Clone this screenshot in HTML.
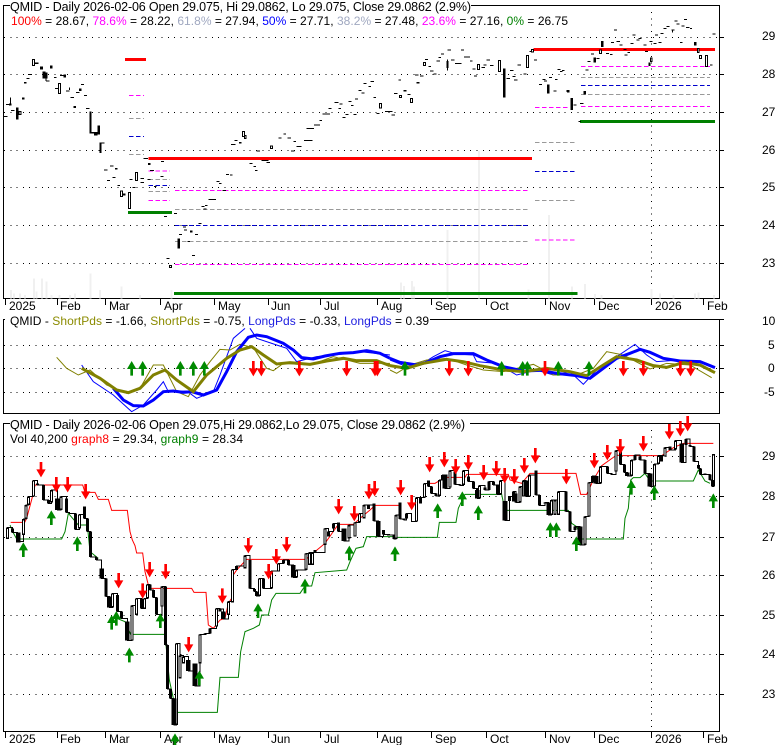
<!DOCTYPE html>
<html><head><meta charset="utf-8"><style>
html,body{margin:0;padding:0;background:#fff}
svg{display:block}
text{font-family:"Liberation Sans",Arial,sans-serif;font-size:12px;fill:#000}
.g{stroke:#000;stroke-width:1;stroke-dasharray:1 5.3;fill:none;shape-rendering:crispEdges}
.f{stroke:#000;stroke-width:1;fill:none;shape-rendering:crispEdges}
.t{fill:none;stroke:#000;stroke-width:3;shape-rendering:crispEdges}
.k rect{fill:#000;shape-rendering:crispEdges}
.h rect{fill:#fff;stroke:#000;stroke-width:3;shape-rendering:crispEdges}
.v{fill:none;stroke:#f0f0f0;stroke-width:6;shape-rendering:crispEdges}
.c{shape-rendering:crispEdges}
</style></head><body>
<svg width="780" height="745" viewBox="0 0 780 745" xmlns="http://www.w3.org/2000/svg">
<defs>
<polygon id="u" fill="#008a00" points="0,0 14,24 4,24 4,44 -4,44 -4,24 -14,24"/>
<polygon id="d" fill="#f00" points="-4,0 4,0 4,22 14,22 0,46 -14,22 -4,22"/>
</defs>
<rect width="780" height="745" fill="#fff"/>

<!-- PANEL 1 -->
<path class="g" d="M4 37.5H719M4 74.5H719M4 112.5H719M4 150.5H719M4 187.5H719M4 225.5H719M4 263.5H719"/>
<path class="g" d="M651.5 12V298"/>
<path class="f" d="M10 5.5H3.5V298.5H719.5V5.5H471M719 37.5h5M719 74.5h5M719 112.5h5M719 150.5h5M719 187.5h5M719 225.5h5M719 263.5h5M5.5 298v7M57.5 298v7M105.5 298v7M160.5 298v7M214.5 298v7M268.5 298v7M320.5 298v7M377.5 298v7M431.5 298v7M486.5 298v7M545.5 298v7M594.5 298v7M651.5 298v7M703.5 298v7"/>

<g transform="scale(.33333)">
<path class="v" d="M33 895V870M42 895V880M60 895V880M75 895V885M102 895V835M110 895V875M126 895V835M140 895V845M155 895V885M178 895V885M210 895V885M225 895V880M272 895V820M300 895V870M365 895V860M420 895V885M515 895V870"/>
<path class="c" d="M375 178H438" stroke="#f00" stroke-width="9" fill="none"/>
<path class="c" d="M445 475H1170" stroke="#f00" stroke-width="9" fill="none"/>
<path class="c" d="M384 637H516M522 880H1170" stroke="#008000" stroke-width="9" fill="none"/>
<g class="c" fill="none" stroke-width="3" stroke-dasharray="14 7">
<path stroke="#f0f" d="M387 286H432M445 513H510M445 601H510M525 571H1170M525 793H1170"/>
<path stroke="#999" d="M387 355H432M387 463H432M445 538H510M445 574H510M525 628H1170M525 724H1170"/>
<path stroke="#00c" d="M387 409H432M445 556H510M525 676H1170"/>
</g>
<path class="t" d="M10 350h12M18 313h12M33 331h10M84 224h12M80 236h9M162 232h8M138 243h10M180 226h12M165 265h10M198 273h10M212 292h10M228 277h10M243 254h9M252 286h9M258 325h10M312 510h10M330 498h10M345 506h8M321 541h9M337 532h9M352 556h8M397 562h10M388 538h10M422 535h10M422 547h10M443 538h8M430 475h14M450 512h12M462 560h8M482 529h8M483 484h9M492 649h9M522 640h9M537 703h9M549 681h9M562 724h8M552 690h9M585 703h9M595 671h9M576 766h9M500 775h9M605 620h9M615 616h8M610 627h9M625 598h23M650 545h9M657 550h8M668 572h10M678 523h9M690 525h8M693 433h14M703 422h9M748 490h10M760 500h8M765 511h8M785 482h20M800 487h10M770 453h10M835 414h10M850 402h8M863 414h10M880 424h8M890 439h15M873 453h10M912 421h25M920 385h22M942 375h18M958 361h8M968 342h22M985 325h9M1003 307h12M1015 325h8M1018 312h10M1027 352h9M1037 343h8M1045 304h10M1060 343h9M1053 316h8M1065 297h9M1075 271h9M1085 279h8M1090 250h10M1105 259h8M1112 244h10M1120 292h8M1130 340h8M1155 335h15M32 292v23M208 262v8M138 235v8"/>
<g class="k">
<rect x="27" y="310" width="8" height="7"/><rect x="48" y="323" width="8" height="36"/><rect x="72" y="246" width="8" height="5"/><rect x="66" y="292" width="8" height="7"/><rect x="105" y="187" width="10" height="5"/><rect x="120" y="199" width="9" height="10"/><rect x="127" y="215" width="9" height="21"/><rect x="135" y="217" width="8" height="18"/><rect x="150" y="196" width="8" height="10"/><rect x="190" y="223" width="8" height="10"/><rect x="237" y="265" width="8" height="8"/><rect x="220" y="318" width="8" height="6"/><rect x="268" y="335" width="7" height="63"/><rect x="268" y="396" width="24" height="4"/><rect x="282" y="398" width="10" height="9"/><rect x="292" y="376" width="8" height="28"/><rect x="298" y="429" width="7" height="30"/><rect x="298" y="428" width="16" height="3"/><rect x="345" y="504" width="8" height="5"/><rect x="367" y="580" width="10" height="7"/><rect x="444" y="489" width="8" height="6"/><rect x="532" y="715" width="8" height="31"/><rect x="570" y="692" width="8" height="5"/><rect x="717" y="426" width="8" height="5"/>
</g>
<g class="h">
<rect x="97" y="178" width="7" height="18"/><rect x="175" y="250" width="6" height="30"/><rect x="362" y="573" width="5" height="16"/><rect x="385" y="577" width="6" height="48"/><rect x="407" y="518" width="5" height="23"/><rect x="57" y="335" width="6" height="8"/><rect x="727" y="394" width="6" height="16"/><rect x="733" y="406" width="5" height="9"/><rect x="812" y="438" width="6" height="7"/><rect x="1138" y="310" width="6" height="14"/><rect x="508" y="796" width="6" height="6"/>
</g>
</g>

<g transform="translate(390,0) scale(.33333)">
<path class="v" d="M33 895V847M42 895V858M66 895V843M72 895V860M172 895V690M267 895V453M477 895V645M415 895V868M546 895V860M585 895V852M615 895V882M635 895V885M785 895V867M810 895V880M850 895V885M915 895V880M926 895V878M972 895V885"/>
<path class="c" d="M0 475H426M431 148H975" stroke="#f00" stroke-width="9" fill="none"/>
<path class="c" d="M0 880H563M570 364H975" stroke="#008000" stroke-width="9" fill="none"/>
<g class="c" fill="none" stroke-width="3" stroke-dasharray="14 7">
<path stroke="#f0f" d="M0 571H420M0 793H420M435 322H540M435 720H553M573 199H960M573 319H960"/>
<path stroke="#999" d="M0 628H420M0 724H420M435 427H553M435 601H553M573 232H960M573 283H960"/>
<path stroke="#00c" d="M0 676H420M435 514H553M573 256H960"/>
</g>
<path class="t" d="M0 335h8M5 345h10M12 280h10M25 240h8M52 283h9M75 225h10M90 228h10M105 178h9M115 199h8M120 213h10M130 222h10M140 183h10M145 172h8M153 162h9M173 150h10M183 180h10M195 190h10M205 190h10M213 150h9M222 171h18M240 183h8M247 207h10M252 228h9M275 202h10M290 180h10M300 197h10M280 195h10M350 235h10M360 212h10M372 240h10M383 195h10M368 229h8M400 222h10M418 155h8M432 180h9M447 254h9M457 238h9M462 243h9M477 232h9M490 273h9M495 238h8M502 208h9M510 215h8M516 211h8M528 273h8M550 315h10M570 310h10M565 364h8M587 210h9M593 185h9M603 162h9M620 175h8M648 160h9M660 163h8M663 127h9M672 90h9M680 125h10M688 135h9M700 148h9M703 165h9M712 157h8M722 130h8M727 105h9M740 120h8M745 116h10M760 135h9M765 155h9M778 125h9M790 130h9M795 105h9M805 127h9M812 100h8M820 85h9M830 80h9M845 90h8M853 63h9M860 72h9M870 127h8M875 78h8M882 58h9M888 82h10M900 85h6M968 102h9M960 195h8M172 178v34M848 90v8"/>
<g class="k">
<rect x="41" y="270" width="9" height="5"/><rect x="80" y="246" width="9" height="5"/><rect x="169" y="183" width="7" height="21"/><rect x="339" y="205" width="8" height="88"/><rect x="471" y="253" width="8" height="28"/><rect x="531" y="270" width="8" height="8"/><rect x="541" y="294" width="8" height="36"/><rect x="580" y="273" width="8" height="11"/><rect x="610" y="172" width="8" height="16"/><rect x="633" y="123" width="8" height="18"/><rect x="775" y="187" width="7" height="11"/><rect x="912" y="126" width="8" height="11"/>
</g>
<g class="h">
<rect x="100" y="187" width="6" height="10"/><rect x="28" y="286" width="6" height="6"/><rect x="61" y="295" width="6" height="13"/><rect x="262" y="193" width="6" height="15"/><rect x="325" y="182" width="6" height="32"/><rect x="409" y="167" width="6" height="36"/><rect x="424" y="148" width="6" height="8"/><rect x="628" y="150" width="6" height="11"/><rect x="781" y="174" width="5" height="11"/><rect x="922" y="145" width="5" height="13"/><rect x="928" y="166" width="6" height="10"/><rect x="946" y="167" width="6" height="33"/>
</g>
</g>

<!-- PANEL 2 -->
<path class="g" d="M4 345.5H719M4 368.5H719M4 392.5H719"/>
<path class="f" d="M10 319.5H3.5V413.5H719.5V319.5H430M719 319.5h5M719 345.5h5M719 368.5h5M719 392.5h5"/>
<g transform="translate(0,305) scale(.33333)" fill="none">
<path stroke="#00f" stroke-width="3" d="M245 180L280 230L340 270L395 320L430 300L470 255L490 230L505 260L560 258L590 280L640 260L660 210L700 100L735 70M750 70L770 100L830 120L860 130L890 170L950 155L1020 148L1080 140L1170 150"/>
<path stroke="#808000" stroke-width="3" d="M170 157L200 190L235 210L270 195L320 240L380 265L420 250L460 180L490 180L530 260L565 275L600 210L630 170L660 133L690 135L720 118L760 128L800 190L820 197L850 175L930 180L1000 155L1080 175L1170 175"/>
<path stroke="#00f" stroke-width="9" d="M340 250L370 285L400 302L430 303L460 285L490 260L520 258L550 262L575 260L610 270L650 255L680 200L710 140L745 97L770 90L800 95L850 115L880 135L905 158L940 162L975 153L1020 145L1060 143L1100 137L1140 145L1170 160"/>
<path stroke="#808000" stroke-width="9" d="M245 190L300 220L350 255L385 263L420 250L460 210L495 195L530 225L580 260L620 210L680 160L720 135L755 125L790 150L830 177L870 173L930 178L980 168L1030 160L1070 167L1130 167L1170 182"/>
<g fill="#000">
<use href="#u" x="395" y="168"/><use href="#u" x="428" y="168"/><use href="#u" x="541" y="168"/><use href="#u" x="580" y="168"/><use href="#u" x="613" y="168"/>
<use href="#d" x="760" y="168"/><use href="#d" x="784" y="168"/><use href="#d" x="898" y="168"/><use href="#d" x="1040" y="168"/><use href="#d" x="1125" y="168"/><use href="#d" x="1132" y="168"/>
</g>
</g>
<g transform="translate(390,305) scale(.33333)" fill="none">
<path stroke="#00f" stroke-width="3" d="M0 165L50 185L90 180L130 155L165 137L200 147L250 150L260 170L320 175L380 210L440 195L490 210L540 200L580 238L620 195L680 155L735 118L770 150L800 170L870 165L950 175L975 185"/>
<path stroke="#808000" stroke-width="3" d="M0 195L20 205L60 180L110 165L170 160L230 180L280 195L340 200L430 178L490 210L560 210L610 190L650 140L700 150L780 192L830 175L900 180L965 218"/>
<path stroke="#00f" stroke-width="9" d="M0 160L30 172L80 180L110 172L150 155L190 146L250 146L290 165L340 185L400 198L450 196L500 205L560 212L600 220L640 190L680 160L720 145L750 133L780 142L820 160L870 168L930 170L975 188"/>
<path stroke="#808000" stroke-width="9" d="M0 182L50 190L100 175L170 163L220 170L270 182L340 195L400 200L470 190L540 200L590 212L640 180L680 155L740 165L790 182L830 187L880 173L930 180L975 203"/>
<use href="#u" x="45" y="168"/><use href="#u" x="335" y="168"/><use href="#u" x="398" y="168"/><use href="#u" x="412" y="168"/><use href="#u" x="505" y="168"/><use href="#u" x="597" y="168"/>
<use href="#d" x="178" y="168"/><use href="#d" x="235" y="168"/><use href="#d" x="465" y="168"/><use href="#d" x="700" y="168"/><use href="#d" x="760" y="168"/><use href="#d" x="871" y="168"/><use href="#d" x="902" y="168"/>
</g>

<!-- PANEL 3 -->
<path class="g" d="M4 456.5H719M4 496.5H719M4 537.5H719M4 575.5H719M4 615.5H719M4 654.5H719M4 694.5H719"/>
<path class="g" d="M651.5 430V731"/>
<path class="f" d="M10 423.5H3.5V731.5H719.5V423.5H470M719 456.5h5M719 496.5h5M719 537.5h5M719 575.5h5M719 615.5h5M719 654.5h5M719 694.5h5M5.5 731v7M57.5 731v7M105.5 731v7M160.5 731v7M214.5 731v7M268.5 731v7M320.5 731v7M377.5 731v7M431.5 731v7M486.5 731v7M545.5 731v7M594.5 731v7M651.5 731v7M703.5 731v7"/>

<g transform="translate(0,415) scale(.33333)" fill="none">
<path stroke="#f00" stroke-width="3" d="M32 322H74L80 310L100 235L105 210H248L255 232H285L295 253H325L335 286H382L390 350L397 375L405 392L410 414H428L435 470L445 510L450 520H575L582 532H618L625 630L640 640L660 615L675 610L685 565L695 550L700 480L710 465L740 433H918L945 410L975 385L1015 328H1060L1080 310L1110 285L1125 271H1170"/>
<path stroke="#008000" stroke-width="3" d="M30 330L38 350L50 372H185L195 350L205 295L235 330H262L270 410L295 430M350 610L375 620L392 658H495L508 795L520 850L530 892H652L660 787H715L722 710L735 650L760 640L778 630L785 600H805L815 555L828 535H900L915 513H935L945 473L1040 465L1050 440L1068 400L1090 395L1100 365H1170"/>
<g class="c">
<path stroke="#000" stroke-width="3" d="M22 372V338H38V352H52V380H70V312H78V270H86V245H100V196H112V210H130V255H145V265H155V225H172V285H183V245H200V292H208V295H226V343H238V298H253V310H262V350H272V426H290V435H305V490H318V545H328V577H338V535H352V590H365V610H382V677H396V572H410V550H424V580H434V550H442V508H450V525H460V548H470V598H486V515H497V690H503V822H512V850H522V930H530V685H540V722H550V725H565V768H585V813H600V658H615V655H630V640H650V580H660V582H670V612H685V560H697V463H710V453H735V422H750V520H763V530H770V543H778V490H790V520H815V468H835V445H850V435H865V450H880V487H890V465H918V415H928V413H938V413H945V412H975V340H985V350H1000V325H1015V350H1032V378H1047V330H1065V322H1078V295H1092V270H1105V270H1122V318H1135V365H1150V358H1170"/>
<path stroke="#000" stroke-width="9" d="M22 338V372M70 360V312M78 312V270M86 270V245M100 245V196M155 262V225M183 285V245M238 340V298M338 577V535M396 677V572M410 600V550M434 582V550M442 550V508M486 575V515M530 930V685M540 790V722M550 745V725M600 745V658M615 660V655M630 655V640M650 635V580M660 590V582M685 600V560M697 562V463M710 465V453M735 460V422M778 543V490M815 520V468M835 470V445M850 445V435M890 487V465M918 465V415M928 450V413M938 450V413M975 390V340M985 365V350M1047 370V330M1065 365V322M1078 322V295M1092 310V270M1105 282V270"/>
<path stroke="#fff" stroke-width="3" d="M22 342V368M70 356V316M78 308V274M86 266V249M100 241V200M155 258V229M183 281V249M238 336V302M338 573V539M396 673V576M410 596V554M434 578V554M442 546V512M486 571V519M530 926V689M540 786V726M550 741V729M600 741V662M650 631V584M685 596V564M697 558V467M735 456V426M778 539V494M815 516V472M835 466V449M890 483V469M918 461V419M928 446V417M938 446V417M975 386V344M1047 366V334M1065 361V326M1078 318V299M1092 306V274"/>
<path stroke="#000" stroke-width="9" d="M38 340V352M112 205V210M130 210V255M145 255V265M200 250V292M226 295V343M253 275V310M262 310V350M272 350V426M290 428V435M318 490V545M352 540V590M365 590V610M424 550V580M450 508V525M460 525V548M470 548V598M497 515V690M503 690V822M512 822V850M750 435V520M763 522V530M770 530V543M790 490V520M865 435V450M945 405V412M1000 340V325M1015 322V350M1122 266V318M1150 345V358M1165 358V362"/>
<path stroke="#000" stroke-width="14" d="M55 352V382M172 250V285M305 460V490M328 545V577M382 620V677M522 850V930M565 735V768M585 745V813M670 590V612M880 450V487M1032 340V378M1135 318V365"/>
</g>
<use href="#d" x="123" y="141"/><use href="#d" x="169" y="186"/><use href="#d" x="203" y="186"/><use href="#d" x="257" y="207"/><use href="#d" x="356" y="474"/><use href="#d" x="428" y="505"/><use href="#d" x="449" y="441"/><use href="#d" x="497" y="447"/><use href="#d" x="566" y="666"/><use href="#d" x="667" y="520"/><use href="#d" x="745" y="369"/><use href="#d" x="806" y="447"/><use href="#d" x="829" y="402"/><use href="#d" x="860" y="366"/><use href="#d" x="1016" y="252"/><use href="#d" x="1063" y="273"/><use href="#d" x="1107" y="207"/><use href="#d" x="1124" y="198"/>
<use href="#u" x="70" y="382"/><use href="#u" x="154" y="286"/><use href="#u" x="232" y="364"/><use href="#u" x="335" y="600"/><use href="#u" x="349" y="588"/><use href="#u" x="388" y="698"/><use href="#u" x="481" y="595"/><use href="#u" x="598" y="767"/><use href="#u" x="774" y="565"/><use href="#u" x="915" y="491"/><use href="#u" x="1048" y="392"/>
</g>

<g transform="translate(390,415) scale(.33333)" fill="none">
<path stroke="#f00" stroke-width="3" d="M0 271H27M120 205H135L165 187H225L230 178H355L360 195L395 205L420 175H558L572 238H590L610 195L635 152L680 120L690 122H815L850 98L880 85H970"/>
<path stroke="#008000" stroke-width="3" d="M0 365H20V367H142L148 322H198L205 280L225 238H335L340 262L352 286H535L545 325L560 335L575 372H700L705 310L715 280L722 195L730 188H750L765 175L780 198H910L925 165L945 198L960 205"/>
<g class="c">
<path stroke="#000" stroke-width="3" d="M0 360H12V372H18V300H30V312H42V315H50V296H65V320H80V248H92V248H104V205H115V215H125V235H138V243H148V195H158V180H165V220H180V167H195V208H210V212H220V167H235V200H250V220H262V250H268V212H285V225H297V200H310V210H322V238H332V197H345V316H358V245H370V230H378V262H390V215H400V197H408V245H418V180H438V240H448V272H465V262H476V300H485V255H495V255H505V230H528V290H540V350H555V335H570V390H585V305H597V202H608V183H618V205H632V155H652V175H665V178H678V107H692V148H703V172H712V183H725V135H735V120H750V135H765V175H780V215H793V147H805V122H815V122H825V98H840V105H857V77H875V142H888V72H900V95H912V140H925V160H932V178H945V178H960V195H968V214H970V117"/>
<path stroke="#000" stroke-width="9" d="M18 372V300M30 263V312M50 310V296M80 320V248M92 265V248M104 248V205M148 243V195M158 195V180M180 218V167M220 210V167M268 250V212M297 225V200M332 238V197M358 258V245M370 260V230M390 262V215M400 245V197M418 245V180M485 300V255M495 300V255M505 300V230M585 390V305M597 305V202M608 202V183M632 205V155M678 170V107M725 183V135M735 135V120M793 215V147M805 147V122M815 140V122M825 125V98M857 103V77M888 90V72M970 214V117"/>
<path stroke="#fff" stroke-width="3" d="M18 368V304M80 316V252M104 244V209M148 239V199M180 214V171M220 206V171M268 246V216M332 234V201M390 258V219M400 241V201M418 241V184M485 296V259M495 296V259M505 296V234M585 386V309M597 301V206M632 201V159M678 166V111M725 179V139M793 211V151M805 143V126M825 121V102M857 99V81M970 210V121"/>
<path stroke="#000" stroke-width="9" d="M12 362V372M42 310V315M115 197V215M125 215V235M138 235V243M195 170V208M210 208V212M235 185V200M250 200V220M262 220V250M285 218V225M310 200V210M322 208V238M378 235V262M438 167V240M448 240V272M465 262V265M528 230V290M540 290V350M555 345V335M652 155V175M665 175V178M692 107V148M703 148V172M750 125V135M765 135V175M840 95V105M900 90V95M912 95V140M925 150V160M932 160V178M945 175V178M960 178V195M968 195V214"/>
<path stroke="#000" stroke-width="14" d="M165 178V220M262 225V250M345 258V316M408 197V245M476 262V300M570 335V390M618 183V205M712 172V183M780 175V215M875 85V142"/>
</g>
<use href="#d" x="32" y="195"/><use href="#d" x="65" y="240"/><use href="#d" x="119" y="126"/><use href="#d" x="163" y="111"/><use href="#d" x="197" y="132"/><use href="#d" x="235" y="120"/><use href="#d" x="281" y="150"/><use href="#d" x="319" y="138"/><use href="#d" x="344" y="159"/><use href="#d" x="373" y="162"/><use href="#d" x="403" y="129"/><use href="#d" x="436" y="99"/><use href="#d" x="529" y="162"/><use href="#d" x="613" y="114"/><use href="#d" x="652" y="90"/><use href="#d" x="691" y="72"/><use href="#d" x="760" y="63"/><use href="#d" x="838" y="27"/><use href="#d" x="871" y="18"/><use href="#d" x="893" y="3"/>
<use href="#u" x="15" y="394"/><use href="#u" x="143" y="265"/><use href="#u" x="217" y="229"/><use href="#u" x="265" y="271"/><use href="#u" x="481" y="322"/><use href="#u" x="499" y="322"/><use href="#u" x="559" y="364"/><use href="#u" x="724" y="195"/><use href="#u" x="793" y="211"/><use href="#u" x="970" y="235"/>
</g>

<!-- Text -->
<text x="10" y="11" textLength="461" style="font-size:12.5px">QMID - Daily 2026-02-06 Open 29.075, Hi 29.0862, Lo 29.075, Close 29.0862 (2.9%)</text>
<text x="11" y="25" textLength="557"><tspan fill="#f00">100%</tspan> = 28.67, <tspan fill="#f0f">78.6%</tspan> = 28.22, <tspan fill="#a0a8c0">61.8%</tspan> = 27.94, <tspan fill="#00f">50%</tspan> = 27.71, <tspan fill="#a0a8c0">38.2%</tspan> = 27.48, <tspan fill="#f0f">23.6%</tspan> = 27.16, <tspan fill="#008000">0%</tspan> = 26.75</text>
<rect x="5" y="314" width="424" height="12" fill="#fff"/>
<path class="f" d="M3.5 319.5V330"/>
<text x="10" y="325" textLength="419"><tspan>QMID - </tspan><tspan fill="#8b8b00">ShortPds</tspan> = -1.66, <tspan fill="#8b8b00">ShortPds</tspan> = -0.75, <tspan fill="#2020e0">LongPds</tspan> = -0.33, <tspan fill="#2020e0">LongPds</tspan> = 0.39</text>
<text x="10" y="429" textLength="455" style="font-size:12.5px">QMID - Daily 2026-02-06 Open 29.075,Hi 29.0862,Lo 29.075, Close 29.0862 (2.9%)</text>
<text x="10" y="443" textLength="233">Vol 40,200 <tspan fill="#f00">graph8</tspan> = 29.34, <tspan fill="#008000">graph9</tspan> = 28.34</text>
<text x="9" y="310">2025</text><text x="60" y="310">Feb</text><text x="109" y="310">Mar</text><text x="164" y="310">Apr</text><text x="218" y="310">May</text><text x="271" y="310">Jun</text><text x="324" y="310">Jul</text><text x="381" y="310">Aug</text><text x="435" y="310">Sep</text><text x="490" y="310">Oct</text><text x="549" y="310">Nov</text><text x="598" y="310">Dec</text><text x="655" y="310">2026</text><text x="707" y="310">Feb</text>
<text x="9" y="743">2025</text><text x="60" y="743">Feb</text><text x="109" y="743">Mar</text><text x="164" y="743">Apr</text><text x="218" y="743">May</text><text x="271" y="743">Jun</text><text x="324" y="743">Jul</text><text x="381" y="743">Aug</text><text x="435" y="743">Sep</text><text x="490" y="743">Oct</text><text x="549" y="743">Nov</text><text x="598" y="743">Dec</text><text x="655" y="743">2026</text><text x="707" y="743">Feb</text>
<text x="762" y="40">29</text><text x="762" y="78">28</text><text x="762" y="116">27</text><text x="762" y="154">26</text><text x="762" y="191">25</text><text x="762" y="229">24</text><text x="762" y="267">23</text>
<text x="762" y="325">10</text><text x="768" y="349">5</text><text x="768" y="372">0</text><text x="764" y="396">-5</text>
<text x="762" y="460">29</text><text x="762" y="500">28</text><text x="762" y="541">27</text><text x="762" y="579">26</text><text x="762" y="619">25</text><text x="762" y="658">24</text><text x="762" y="698">23</text>
<g transform="translate(0,415) scale(.33333)"><use href="#u" x="525" y="955"/></g>
</svg>
</body></html>
